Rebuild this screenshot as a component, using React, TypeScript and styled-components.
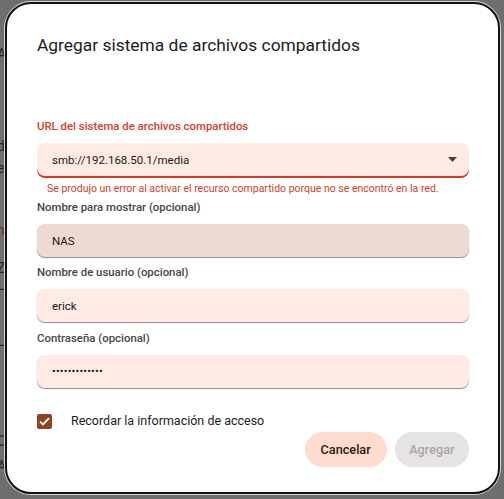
import React from "react";
import styled, { createGlobalStyle } from "styled-components";

const GlobalStyle = createGlobalStyle`
  html, body {
    margin: 0;
    padding: 0;
    background: #6e6e6e;
    font-family: Roboto, "Noto Sans", Arial, sans-serif;
  }
`;

const Screen = styled.div`
  position: relative;
  width: 504px;
  height: 499px;
  overflow: hidden;
  background: #6e6e6e;
`;

// the page behind the scrim, only a sliver of it shows on the left
const BehindPage = styled.div`
  display: flex;
  flex-direction: column;
  padding: 46px 0 0 0;
  margin-left: -3px;
  font-size: 14px;
  color: #262626;
`;

const BehindLine = styled.div<{ $gap: number; $tint?: boolean }>`
  margin-top: ${({ $gap }) => $gap}px;
  line-height: 16px;
  color: ${({ $tint }) => ($tint ? "#6a2c12" : "#262626")};
`;

const Overlay = styled.div`
  position: absolute;
  inset: 0;
  padding: 2px 0 0 5px;
`;

const Dialog = styled.div`
  box-sizing: border-box;
  width: 495px;
  height: 492px;
  background: #fff;
  border: 2px solid #111;
  border-radius: 26px;
  box-shadow: 0 0 0 1px #d8d8d8;
  padding: 0 29px 0 30px;
  display: flex;
  flex-direction: column;
`;

const Title = styled.h2`
  margin: 30px 0 0 0;
  font-size: 17.4px;
  font-weight: 400;
  line-height: 22px;
  color: #1e1b1d;
`;

const Label = styled.div<{ $error?: boolean; $top: number }>`
  margin-top: ${({ $top }) => $top}px;
  font-size: 11.4px;
  font-weight: 500;
  line-height: 14px;
  color: ${({ $error }) => ($error ? "#d6402a" : "#4a4546")};
`;

const FieldBox = styled.div<{ $error?: boolean; $hover?: boolean }>`
  margin-top: 10px;
  height: 33px;
  border-radius: 8px;
  background: ${({ $hover }) => ($hover ? "#ecdad3" : "#ffebe4")};
  box-shadow: ${({ $error }) =>
    $error ? "0 2px 0 #d8391f" : "0 1px 1px rgba(0, 0, 0, 0.45)"};
  display: flex;
  align-items: center;
`;

const FieldInput = styled.input`
  flex: 1;
  min-width: 0;
  border: none;
  outline: none;
  background: transparent;
  padding: 0 0 0 15px;
  font-family: Roboto, "Noto Sans", Arial, sans-serif;
  font-size: 11.5px;
  color: #1a1718;
  &[type="password"] {
    font-size: 11px;
    letter-spacing: 0.2px;
  }
`;

const Caret = styled.svg`
  width: 9px;
  height: 5px;
  margin-right: 12px;
  flex: none;
`;

const ErrorText = styled.div`
  margin-top: 6px;
  padding-left: 10px;
  font-size: 10.5px;
  line-height: 13px;
  color: #d6402a;
`;

const CheckRow = styled.label`
  margin-top: 25px;
  display: flex;
  align-items: center;
  gap: 19px;
  font-size: 12.5px;
  color: #1e1b1d;
  line-height: 16px;
`;

const CheckBox = styled.span`
  width: 15px;
  height: 15px;
  border-radius: 2px;
  background: #8e4420;
  display: flex;
  align-items: center;
  justify-content: center;
`;

const Actions = styled.div`
  margin-top: 3px;
  display: flex;
  justify-content: flex-end;
  gap: 8px;
`;

const Button = styled.button<{ $disabled?: boolean }>`
  height: 35px;
  padding: 0 ${({ $disabled }) => ($disabled ? 14.5 : 16)}px;
  border: none;
  border-radius: 18px;
  font-family: Roboto, "Noto Sans", Arial, sans-serif;
  font-size: 12.7px;
  font-weight: 500;
  background: ${({ $disabled }) => ($disabled ? "#e6e3e3" : "#ffdccd")};
  color: ${({ $disabled }) => ($disabled ? "#a8a4a4" : "#2b1a14")};
`;

export default function App() {
  return (
    <Screen>
      <GlobalStyle />
      <BehindPage>
        <BehindLine $gap={0}>A</BehindLine>
        <BehindLine $gap={76}>d</BehindLine>
        <BehindLine $gap={6}>e</BehindLine>
        <BehindLine $gap={46} $tint>
          h
        </BehindLine>
        <BehindLine $gap={22}>Z</BehindLine>
        <BehindLine $gap={1}>L</BehindLine>
        <BehindLine $gap={40}>L</BehindLine>
        <BehindLine $gap={84}>C</BehindLine>
        <BehindLine $gap={9}>A</BehindLine>
      </BehindPage>
      <Overlay>
        <Dialog>
          <Title>Agregar sistema de archivos compartidos</Title>

          <Label $error $top={63}>
            URL del sistema de archivos compartidos
          </Label>
          <FieldBox $error>
            <FieldInput readOnly defaultValue="smb://192.168.50.1/media" />
            <Caret viewBox="0 0 9 5">
              <path d="M0 0 L9 0 L4.5 5 Z" fill="#5b3a2c" />
            </Caret>
          </FieldBox>
          <ErrorText>
            Se produjo un error al activar el recurso compartido porque no se
            encontró en la red.
          </ErrorText>

          <Label $top={5}>Nombre para mostrar (opcional)</Label>
          <FieldBox $hover>
            <FieldInput readOnly defaultValue="NAS" />
          </FieldBox>

          <Label $top={8}>Nombre de usuario (opcional)</Label>
          <FieldBox>
            <FieldInput readOnly defaultValue="erick" />
          </FieldBox>

          <Label $top={9}>Contraseña (opcional)</Label>
          <FieldBox>
            <FieldInput readOnly type="password" defaultValue="erickpassword" />
          </FieldBox>

          <CheckRow>
            <CheckBox>
              <svg width="11" height="9" viewBox="0 0 11 9">
                <path
                  d="M1 4.6 L4 7.4 L10 1.2"
                  fill="none"
                  stroke="#fff"
                  strokeWidth="1.8"
                />
              </svg>
            </CheckBox>
            Recordar la información de acceso
          </CheckRow>

          <Actions>
            <Button>Cancelar</Button>
            <Button $disabled disabled>
              Agregar
            </Button>
          </Actions>
        </Dialog>
      </Overlay>
    </Screen>
  );
}
